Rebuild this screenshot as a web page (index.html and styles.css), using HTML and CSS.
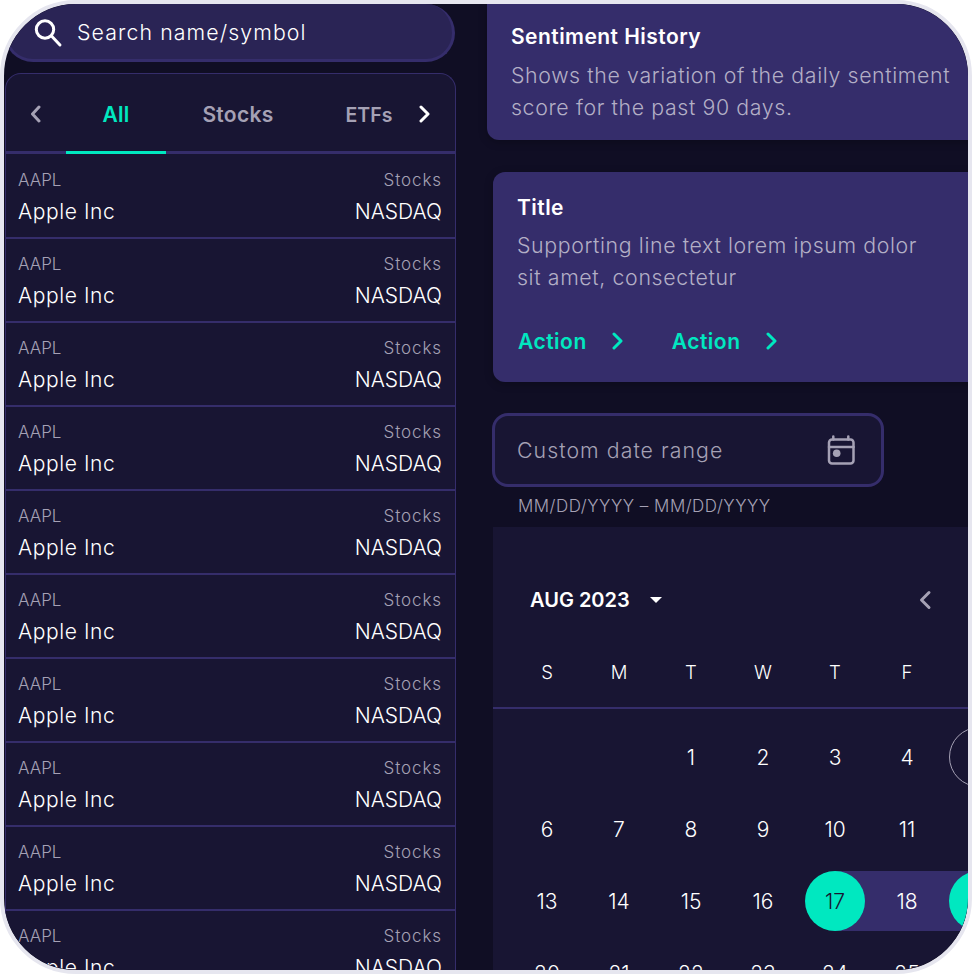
FILE: index.html
```html
<!DOCTYPE html>
<html lang="en">
<head>
  <meta charset="UTF-8" />
  <meta name="viewport" content="width=device-width, initial-scale=1.0" />
  <title>Sentiment</title>
  <link rel="stylesheet" href="styles.css">
</head>
<body>
  <div class="screen">

    <!-- Left column -->
    <div class="coluna-esq">
      <div class="busca">
        <svg class="busca-icone" width="32" height="32" viewBox="0 0 32 32"><circle cx="14" cy="13.500" r="8.700" /><path d="M20.500 20l8.500 9" /></svg>
        <span>Search name/symbol</span>
      </div>

      <div class="painel">
        <div class="abas">
          <svg class="seta seta-esq" width="12" height="18" viewBox="0 0 12 18"><path d="M10 2L3.500 9l6.500 7" /></svg>
          <div class="aba aba-ativa">All</div>
          <div class="aba aba-stocks">Stocks</div>
          <div class="aba aba-etfs">ETFs</div>
          <svg class="seta seta-dir" width="12" height="18" viewBox="0 0 12 18"><path d="M2 2l7 7-7 7" /></svg>
        </div>

        <div class="lista">
          <div class="linha"><div class="linha-topo"><span>AAPL</span><span class="tipo">Stocks</span></div><div class="linha-base"><span class="nome">Apple Inc</span><span>NASDAQ</span></div></div>
          <div class="linha"><div class="linha-topo"><span>AAPL</span><span class="tipo">Stocks</span></div><div class="linha-base"><span class="nome">Apple Inc</span><span>NASDAQ</span></div></div>
          <div class="linha"><div class="linha-topo"><span>AAPL</span><span class="tipo">Stocks</span></div><div class="linha-base"><span class="nome">Apple Inc</span><span>NASDAQ</span></div></div>
          <div class="linha"><div class="linha-topo"><span>AAPL</span><span class="tipo">Stocks</span></div><div class="linha-base"><span class="nome">Apple Inc</span><span>NASDAQ</span></div></div>
          <div class="linha"><div class="linha-topo"><span>AAPL</span><span class="tipo">Stocks</span></div><div class="linha-base"><span class="nome">Apple Inc</span><span>NASDAQ</span></div></div>
          <div class="linha"><div class="linha-topo"><span>AAPL</span><span class="tipo">Stocks</span></div><div class="linha-base"><span class="nome">Apple Inc</span><span>NASDAQ</span></div></div>
          <div class="linha"><div class="linha-topo"><span>AAPL</span><span class="tipo">Stocks</span></div><div class="linha-base"><span class="nome">Apple Inc</span><span>NASDAQ</span></div></div>
          <div class="linha"><div class="linha-topo"><span>AAPL</span><span class="tipo">Stocks</span></div><div class="linha-base"><span class="nome">Apple Inc</span><span>NASDAQ</span></div></div>
          <div class="linha"><div class="linha-topo"><span>AAPL</span><span class="tipo">Stocks</span></div><div class="linha-base"><span class="nome">Apple Inc</span><span>NASDAQ</span></div></div>
          <div class="linha"><div class="linha-topo"><span>AAPL</span><span class="tipo">Stocks</span></div><div class="linha-base"><span class="nome">Apple Inc</span><span>NASDAQ</span></div></div>
        </div>
      </div>
    </div>

    <!-- Right column -->
    <div class="coluna-dir">
      <div class="cartao-sentimento">
        <h2 class="titulo">Sentiment History</h2>
        <p class="texto">Shows the variation of the daily sentiment<br>score for the past 90 days.</p>
      </div>

      <div class="cartao-titulo">
        <h2 class="titulo">Title</h2>
        <p class="texto">Supporting line text lorem ipsum dolor<br>sit amet, consectetur</p>
        <div class="acoes">
          <div class="acao">Action <svg width="12" height="18" viewBox="0 0 12 18"><path d="M2 2l7 7-7 7" /></svg></div>
          <div class="acao">Action <svg width="12" height="18" viewBox="0 0 12 18"><path d="M2 2l7 7-7 7" /></svg></div>
        </div>
      </div>

      <div class="campo-data">
        <span>Custom date range</span>
        <svg width="28" height="30" viewBox="0 0 28 30"><rect class="cal-linha" x="2" y="4.500" width="24.500" height="24" rx="3" /><path class="cal-linha" d="M2 12h24.500M6.300 1.500v3M21.300 1.500v3" /><circle class="cal-ponto" cx="9.700" cy="18.300" r="3.800" /></svg>
      </div>
      <div class="ajuda-data">MM/DD/YYYY – MM/DD/YYYY</div>

      <div class="calendario">
        <div class="cal-topo">
          <span class="cal-mes">AUG 2023</span>
          <span class="cal-triangulo"></span>
          <svg class="cal-nav" width="14" height="20" viewBox="0 0 14 20"><path d="M11 2.500L3.500 10l7.500 7.500" /></svg>
        </div>

        <div class="cal-semana">
          <span>S</span><span>M</span><span>T</span><span>W</span><span>T</span><span>F</span><span>S</span>
        </div>

        <div class="cal-grade">
          <div class="dia"></div><div class="dia"></div>
          <div class="dia"><span>1</span></div><div class="dia"><span>2</span></div><div class="dia"><span>3</span></div><div class="dia"><span>4</span></div><div class="dia"><span class="hoje">5</span></div>
          <div class="dia"><span>6</span></div><div class="dia"><span>7</span></div><div class="dia"><span>8</span></div><div class="dia"><span>9</span></div><div class="dia"><span>10</span></div><div class="dia"><span>11</span></div><div class="dia"><span>12</span></div>
          <div class="dia"><span>13</span></div><div class="dia"><span>14</span></div><div class="dia"><span>15</span></div><div class="dia"><span>16</span></div><div class="dia inicio"><span class="marcado">17</span></div><div class="dia meio"><span>18</span></div><div class="dia fim"><span class="marcado">19</span></div>
          <div class="dia"><span>20</span></div><div class="dia"><span>21</span></div><div class="dia"><span>22</span></div><div class="dia"><span>23</span></div><div class="dia"><span>24</span></div><div class="dia"><span>25</span></div><div class="dia"><span>26</span></div>
        </div>
      </div>
    </div>

  </div>
</body>
</html>
```

FILE: styles.css
```css
* {
  box-sizing: border-box;
}

body {
  margin: 0;
  background-color: #fff;
  font-family: Inter, "Noto Sans", sans-serif;
  color: #fff;
}

.screen {
  display: flex;
  gap: 31px;
  width: 972px;
  height: 974px;
  border: 4px solid #e6e6ef;
  border-radius: 76px;
  background-color: #100e24;
  overflow: hidden;
}

svg {
  fill: none;
  stroke-linecap: round;
  stroke-linejoin: round;
}

/* Left column */
.coluna-esq {
  flex: none;
  width: 452px;
}

.busca {
  display: flex;
  align-items: center;
  gap: 14px;
  width: 451px;
  height: 58px;
  padding-left: 24px;
  background-color: #2a2455;
  border: 3px solid #352d6b;
  border-top: none;
  border-radius: 29px;
  font-size: 21.300px;
  font-weight: 350;
  letter-spacing: 1.1px;
}

.busca-icone {
  stroke: #fff;
  stroke-width: 3;
}

.painel {
  margin-top: 11px;
  margin-left: 1px;
  background-color: #181533;
  border: 1px solid #352d6b;
  border-bottom: none;
  border-radius: 16px 16px 0 0;
}

.abas {
  position: relative;
  display: flex;
  height: 80px;
  padding-left: 60px;
  border-bottom: 3px solid #352d6b;
}

.aba {
  display: flex;
  align-items: center;
  justify-content: center;
  height: 80px;
  padding-top: 4px;
  border-bottom: 3px solid transparent;
  font-size: 21px;
  font-weight: 600;
  letter-spacing: 0.3px;
  color: #a5a1b5;
}

.aba-ativa {
  width: 100px;
  color: #00e8c0;
  border-bottom-color: #00e8c0;
}

.aba-stocks {
  width: 144px;
}

.aba-etfs {
  width: 118px;
  font-size: 19.500px;
  letter-spacing: 0;
}

.seta {
  position: absolute;
  top: 31px;
  stroke-width: 3;
}

.seta-esq {
  left: 23px;
  stroke: #a5a1b5;
}

.seta-dir {
  right: 24px;
  stroke: #fff;
}

.lista {
  padding-top: 1px;
}

.linha {
  height: 84px;
  padding: 12px 13px 0 12px;
  border-bottom: 2px solid #352d6b;
}

.linha-topo,
.linha-base {
  display: flex;
  justify-content: space-between;
}

.linha-topo {
  height: 27px;
  line-height: 26px;
  font-size: 17px;
  font-weight: 350;
  color: #a5a1b5;
}

.tipo {
  letter-spacing: 0.9px;
}

.linha-base {
  height: 36px;
  line-height: 36px;
  font-size: 21px;
  font-weight: 350;
}

.nome {
  letter-spacing: 0.6px;
}

/* Right column */
.coluna-dir {
  flex: none;
  width: 546px;
}

.titulo {
  margin: 0;
  font-size: 21px;
  font-weight: 600;
  letter-spacing: 0.45px;
  line-height: 32px;
}

.texto {
  margin: 6px 0 0;
  font-size: 21.300px;
  font-weight: 350;
  letter-spacing: 0.63px;
  line-height: 32px;
  color: #b3afc6;
}

.cartao-sentimento {
  height: 136px;
  padding: 17px 24px 0;
  background-color: #352d6b;
  border-radius: 0 0 0 12px;
  box-shadow: 0 2px 8px rgba(0, 0, 0, 0.25);
}

.cartao-titulo {
  height: 210px;
  margin-top: 32px;
  margin-left: 6px;
  padding: 20px 24px 0;
  background-color: #352d6b;
  border-radius: 12px;
  box-shadow: 0 2px 8px rgba(0, 0, 0, 0.25);
}

.cartao-titulo .texto {
  margin-top: 5px;
}

.acoes {
  display: flex;
  gap: 48px;
  margin-top: 32px;
  margin-left: 1px;
}

.acao {
  display: flex;
  align-items: center;
  gap: 25px;
  height: 32px;
  font-size: 21px;
  font-weight: 600;
  letter-spacing: 0.5px;
  color: #00e8c0;
}

.acao svg {
  stroke: #00e8c0;
  stroke-width: 3;
}

.campo-data {
  display: flex;
  align-items: center;
  justify-content: space-between;
  width: 392px;
  height: 74px;
  margin-top: 31px;
  margin-left: 5px;
  padding: 0 26px 0 22px;
  background-color: #181533;
  border: 3px solid #352d6b;
  border-radius: 16px;
  font-size: 21.300px;
  font-weight: 350;
  letter-spacing: 1.05px;
  color: #a5a1b5;
}

.cal-linha {
  stroke: #a5a1b5;
  stroke-width: 2.500;
}

.cal-ponto {
  fill: #a5a1b5;
}

.ajuda-data {
  height: 40px;
  margin-left: 31px;
  line-height: 38px;
  font-size: 17px;
  font-weight: 350;
  letter-spacing: 0.5px;
  color: #a5a1b5;
}

.calendario {
  width: 540px;
  margin-left: 6px;
  padding: 36px 0 30px;
  background-color: #181533;
}

.cal-topo {
  display: flex;
  align-items: center;
  height: 74px;
  padding-left: 37px;
}

.cal-mes {
  font-size: 20px;
  font-weight: 600;
}

.cal-triangulo {
  width: 0;
  height: 0;
  margin-left: 20px;
  border-left: 6px solid transparent;
  border-right: 6px solid transparent;
  border-top: 6px solid #fff;
}

.cal-nav {
  margin-left: 256px;
  stroke: #a5a1b5;
  stroke-width: 3;
}

.cal-semana {
  display: grid;
  grid-template-columns: repeat(7, 72px);
  height: 72px;
  padding: 0 18px;
  align-items: center;
  border-bottom: 2px solid #352d6b;
  font-size: 18.500px;
  font-weight: 350;
  text-align: center;
}

.cal-grade {
  display: grid;
  grid-template-columns: repeat(7, 72px);
  grid-auto-rows: 60px;
  row-gap: 12px;
  padding: 18px 18px 0;
}

.dia {
  display: flex;
  justify-content: center;
  font-size: 21px;
  font-weight: 350;
}

.dia span {
  display: flex;
  align-items: center;
  justify-content: center;
  width: 60px;
  height: 60px;
  border-radius: 50%;
}

.dia .hoje {
  border: 1px solid #a5a1b5;
}

.dia .marcado {
  background-color: #00e8c0;
  color: #181533;
}

.inicio {
  background: linear-gradient(to right, transparent 50%, #352d6b 50%);
}

.meio {
  background-color: #352d6b;
}

.fim {
  background: linear-gradient(to right, #352d6b 50%, transparent 50%);
}
```
